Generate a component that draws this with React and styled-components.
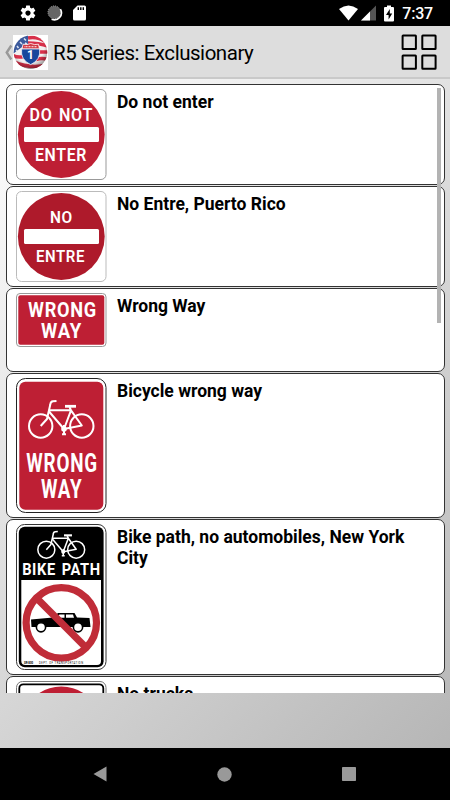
import styled, { createGlobalStyle } from 'styled-components';

const GlobalStyle = createGlobalStyle`
  * {
    box-sizing: border-box;
  }
  body {
    margin: 0;
    font-family: Roboto, sans-serif;
    color: #000;
  }
`

const Screen = styled.div`
  display: flex;
  flex-direction: column;
  width: 450px;
  height: 800px;
  overflow: hidden;
  background: #000;
`

const StatusBar = styled.div`
  display: flex;
  align-items: center;
  justify-content: space-between;
  flex: none;
  height: 26px;
  padding: 0 17px 0 19px;
  background: #000;
`

const StatusGroup = styled.div`
  display: flex;
  align-items: center;
  gap: ${({ gap }) => gap}px;
`

const Clock = styled.span`
  font-size: 16px;
  font-weight: 500;
  line-height: 26px;
  letter-spacing: -0.2px;
  padding-top: 1px;
  color: #fff;
`

const ActionBar = styled.header`
  display: flex;
  align-items: center;
  flex: none;
  height: 53px;
  padding: 1px 13px 0 5px;
  background: #dddddd;
  border-bottom: 2px solid #c9c9c9;
`

const Title = styled.h1`
  flex: 1;
  margin: 0 0 0 5px;
  padding-top: 2px;
  font-size: 20.5px;
  font-weight: 400;
  line-height: 26px;
  letter-spacing: -0.46px;
  white-space: nowrap;
`

const Body = styled.main`
  flex: 1;
  min-height: 0;
  padding: 5px 5px 0 6px;
  background: linear-gradient(135deg, #ffffff 0%, #b6b6b6 100%);
`

const List = styled.div`
  display: flex;
  flex-direction: column;
  gap: 1px;
  position: relative;
  width: 439px;
  height: 609px;
  overflow: hidden;
`

const ScrollThumb = styled.div`
  position: absolute;
  top: 4px;
  right: 4px;
  width: 4px;
  height: 235px;
  background: #b3b3b3;
`

const Row = styled.div`
  display: flex;
  align-items: flex-start;
  flex: none;
  height: ${({ height }) => height}px;
  padding: 4px 15px 0 9px;
  border: 1px solid #333;
  border-radius: 7px;
  background: #fff;
`

const RowLabel = styled.div`
  margin: 3px 0 0 11px;
  font-size: 17.5px;
  font-weight: 700;
  line-height: 20.6px;
`

const SignSvg = styled.svg`
  display: block;
  flex: none;
  overflow: visible;
`

const SignText = styled.text`
  font-family: Roboto, sans-serif;
  font-weight: ${({ weight }) => weight || 600};
  letter-spacing: 0.04em;
  word-spacing: 0.12em;
  fill: #fff;
`

const NavBar = styled.nav`
  display: flex;
  align-items: center;
  justify-content: space-between;
  flex: none;
  height: 52px;
  padding: 0 94px 0 93px;
  background: #000;
`

// every legend on a sign is fitted to a fixed width
const Legend = ({ x, y, size, width, weight, children }) => (
  <SignText x={x} y={y} fontSize={size} textLength={width} lengthAdjust="spacingAndGlyphs" weight={weight}>
    {children}
  </SignText>
)

const Bike = ({ transform, width = 2 }) => (
  <g transform={transform} fill="none" stroke="#fff" strokeWidth={width} strokeLinejoin="round">
    <circle cx="24.7" cy="48" r="11.7" />
    <circle cx="65.8" cy="48" r="11.7" />
    <path d="M24.7 48 L31 41 L34.3 26.5 Q34.5 23.5 37 23.3 L40.5 23" />
    <path d="M33 32.3 H55 L48 51 L33 33.5 M48 51 L65.8 47.5 L55 32.3 L53.5 29" />
    <path d="M49 28.3 H60" strokeWidth={width + 0.8} />
    <path d="M48 47 V56 M46 56.3 H50" />
    <circle cx="48" cy="51" r="1.8" fill="#fff" />
  </g>
)

const EnterSign = ({ red, line, top, bottom }) => (
  <SignSvg width="90" height="91" viewBox="0 0 90 91">
    <rect x="0.5" y="0.5" width="89.5" height="90" rx="5" fill="#fff" stroke={line} />
    <circle cx="45.3" cy="45.5" r="43.4" fill={red} />
    <rect x="8" y="38" width="75" height="15" rx="1.5" fill="#fff" />
    <Legend {...top} />
    <Legend {...bottom} />
  </SignSvg>
)

const DoNotEnter = () => (
  <EnterSign
    red="#be1f34"
    line="#999"
    top={{ x: 13.5, y: 32.3, size: 18, width: 63.5, children: 'DO NOT' }}
    bottom={{ x: 19, y: 72.2, size: 18, width: 52, children: 'ENTER' }}
  />
)

const NoEntre = () => (
  <EnterSign
    red="#ae1a2b"
    line="#bbb"
    top={{ x: 34, y: 32, size: 17, width: 22.8, children: 'NO' }}
    bottom={{ x: 20, y: 71, size: 17, width: 49, children: 'ENTRE' }}
  />
)

const WrongWay = () => (
  <SignSvg width="90" height="54" viewBox="0 0 90 54">
    <rect x="0.5" y="0.5" width="89.5" height="53" rx="3.5" fill="#fff" stroke="#999" />
    <rect x="2.3" y="2.3" width="86" height="49.5" rx="2" fill="#be1f34" />
    <Legend x="12" y="24.3" size="21" width="69" weight={700}>WRONG</Legend>
    <Legend x="25" y="45.3" size="21" width="41" weight={700}>WAY</Legend>
  </SignSvg>
)

const BicycleWrongWay = () => (
  <SignSvg width="90" height="135" viewBox="0 0 90 135">
    <rect x="0.5" y="0.5" width="89.5" height="134" rx="9" fill="#fff" stroke="#222" />
    <rect x="3.3" y="3.7" width="84" height="128" rx="6" fill="#be1f34" />
    <Bike />
    <Legend x="10.3" y="93.7" size="25.5" width="71.5" weight={700}>WRONG</Legend>
    <Legend x="25" y="119.8" size="25.5" width="41.5" weight={700}>WAY</Legend>
  </SignSvg>
)

const BikePath = () => (
  <SignSvg width="90" height="146" viewBox="0 0 90 146">
    <rect x="0.5" y="0.5" width="89.5" height="145" rx="8" fill="#fff" stroke="#333" />
    <rect x="2.8" y="2.8" width="84.8" height="140.4" rx="6" fill="#000" />
    <path d="M5.3 56 H85 V137 Q85 141 81 141 H9.3 Q5.3 141 5.3 137 Z" fill="#fff" />
    <Bike transform="translate(12.4 -9.2) scale(0.726)" width={2.1} />
    <Legend x="6.2" y="50.5" size="16.5" width="78.5" weight={700}>BIKE PATH</Legend>
    <path d="M15 95.5 L37 93.5 L42 89 H58.5 L61 93.5 L73.5 94 L74.5 103 H15.5 Z" fill="#000" />
    <path d="M40.5 93.8 L43.5 90.5 H48.5 V93.8 Z M50 90.5 H57 L58 93.8 H50 Z" fill="#fff" />
    <circle cx="25" cy="103.3" r="4.6" fill="#fff" stroke="#000" strokeWidth="1.6" />
    <circle cx="62" cy="103.3" r="4.6" fill="#fff" stroke="#000" strokeWidth="1.6" />
    <g fill="none" stroke="#c02c38" strokeWidth="7.2">
      <circle cx="45.3" cy="98.8" r="35.2" />
      <path d="M20.5 74 L70.2 123.7" />
    </g>
    <text x="8" y="139.5" fontSize="2.8" fontWeight="700" textLength="9">SR-800</text>
    <text x="23" y="139.7" fontSize="2.6" textLength="44">DEPT. OF TRANSPORTATION</text>
  </SignSvg>
)

const NoTrucks = () => (
  <SignSvg width="90" height="90" viewBox="0 0 90 90">
    <rect x="0.5" y="0.5" width="89.5" height="89" rx="6" fill="#fff" stroke="#777" />
    <rect x="3.3" y="3.3" width="84" height="84" rx="4" fill="#fff" stroke="#000" strokeWidth="1.8" />
    <circle cx="45.3" cy="45.5" r="36" fill="none" stroke="#be1f34" strokeWidth="8" />
  </SignSvg>
)

const BackChevron = () => (
  <svg width="8" height="18" viewBox="0 0 8 18">
    <path d="M6.3 2.5 L1.7 9.5 L6.3 16.5" fill="none" stroke="#999" strokeWidth="2.4" />
  </svg>
)

const AppLogo = () => (
  <svg width="35" height="35" viewBox="0 0 35 35">
    <defs>
      <clipPath id="globe">
        <circle cx="17.5" cy="17.3" r="16.8" />
      </clipPath>
      <radialGradient id="shade" cx="0.45" cy="0.35" r="0.65">
        <stop offset="0.7" stopColor="#000" stopOpacity="0" />
        <stop offset="1" stopColor="#000" stopOpacity="0.4" />
      </radialGradient>
    </defs>
    <rect width="35" height="35" fill="#fff" />
    <g clipPath="url(#globe)">
      <rect width="35" height="35" fill="#f4f0f0" />
      <g fill="none" stroke="#d8304a" strokeWidth="3.6">
        <path d="M15 3 Q24 1 33 7 M15 8 Q26 8 35 11 M24 17 H35" />
        <path d="M0 20.5 Q5 23 11 21.5 M23 24.5 Q29 22.5 35 24.5 M1 27 Q17 34 34 30" />
      </g>
      <path d="M0 0 H15 V9 Q8 12 0 19 Z" fill="#3c5a9c" />
      <path d="M4 11 L5.5 13 M7 7 L9 9 M11 3.5 L13 5.5 M12 8 L14 9 M3 15 L4 16" stroke="#dce4f4" strokeWidth="1.5" />
      <circle cx="17.5" cy="17.3" r="16.8" fill="url(#shade)" />
    </g>
    <path d="M10 9.2 Q14 10.3 17.7 8.5 Q21.5 10.3 25.5 9.2 L26.5 14 H9 Z" fill="#d23a44" stroke="#fff" strokeWidth="0.8" />
    <path d="M8.6 14 H26.6 Q28 25 17.7 29.6 Q7.2 25 8.6 14 Z" fill="#17479c" stroke="#e8eef8" strokeWidth="0.8" />
    <path d="M11.5 11.7 H24" stroke="#f4c6ca" strokeWidth="1.2" strokeDasharray="1 0.5" />
    <text x="17.5" y="24.2" fontSize="12" fontWeight="700" fill="#fff" textAnchor="middle">1</text>
  </svg>
)

const GridIcon = () => (
  <svg width="36" height="36" viewBox="0 0 36 36">
    <g fill="none" stroke="#000" strokeWidth="2">
      <rect x="1.6" y="1.6" width="13.3" height="13.3" rx="0.5" />
      <rect x="21.3" y="1.6" width="13.3" height="13.3" rx="0.5" />
      <rect x="1.6" y="21.5" width="13.3" height="13.3" rx="0.5" />
      <rect x="21.3" y="21.5" width="13.3" height="13.3" rx="0.5" />
    </g>
  </svg>
)

const GearIcon = () => (
  <svg width="18" height="18" viewBox="0 0 24 24" fill="#fff">
    <path d="M19.43 12.98c.04-.32.07-.64.07-.98s-.03-.66-.07-.98l2.11-1.65c.19-.15.24-.42.12-.64l-2-3.46c-.12-.22-.39-.3-.61-.22l-2.49 1c-.52-.4-1.08-.73-1.69-.98l-.38-2.65C14.46 2.18 14.25 2 14 2h-4c-.25 0-.46.18-.49.42l-.38 2.65c-.61.25-1.17.59-1.69.98l-2.49-1c-.23-.09-.49 0-.61.22l-2 3.46c-.13.22-.07.49.12.64l2.11 1.65c-.04.32-.07.65-.07.98s.03.66.07.98l-2.11 1.65c-.19.15-.24.42-.12.64l2 3.46c.12.22.39.3.61.22l2.49-1c.52.4 1.08.73 1.69.98l.38 2.65c.03.24.24.42.49.42h4c.25 0 .46-.18.49-.42l.38-2.65c.61-.25 1.17-.59 1.69-.98l2.49 1c.23.09.49 0 .61-.22l2-3.46c.12-.22.07-.49-.12-.64l-2.11-1.65zM12 15.5c-1.93 0-3.5-1.57-3.5-3.5s1.57-3.5 3.5-3.5 3.5 1.57 3.5 3.5-1.57 3.5-3.5 3.5z" />
  </svg>
)

const SyncIcon = () => (
  <svg width="16" height="16" viewBox="0 0 16 16">
    <circle cx="7.4" cy="7.3" r="6.4" fill="#666" />
    <circle cx="7.4" cy="7.3" r="6.4" fill="none" stroke="#aaa" strokeDasharray="1 1" />
    <path d="M13.4 4.2 A7 7 0 0 1 4.6 14.2" fill="none" stroke="#fff" strokeWidth="1.6" />
  </svg>
)

const SdCardIcon = () => (
  <svg width="13" height="16" viewBox="0 0 13 16">
    <path d="M4.5 0.5 H11.5 Q13 0.5 13 2 V14 Q13 15.5 11.5 15.5 H1.5 Q0 15.5 0 14 V5 Z" fill="#fff" />
    <path d="M5.3 2.3 V5 M7.8 2.3 V5 M10.3 2.3 V5" stroke="#000" strokeWidth="1.4" />
  </svg>
)

const WifiIcon = () => (
  <svg width="19" height="16" viewBox="0 0 19 16">
    <path d="M0 4 Q9.5 -3 19 4 L9.5 15.5 Z" fill="#fff" />
  </svg>
)

const SignalIcon = () => (
  <svg width="15" height="16" viewBox="0 0 15 16">
    <path d="M0 15.5 L15 0.5 V15.5 Z" fill="#555" />
    <path d="M0 15.5 L9 6.5 V15.5 Z" fill="#fff" />
  </svg>
)

const BatteryIcon = () => (
  <svg width="10" height="17" viewBox="0 0 10 17">
    <path d="M3 0.5 H7 V2 H9 Q10 2 10 3 V15.5 Q10 16.5 9 16.5 H1 Q0 16.5 0 15.5 V3 Q0 2 1 2 H3 Z" fill="#fff" />
    <path d="M5.8 4 L2 10 H4.6 V14.5 L8.2 8.4 H5.8 Z" fill="#000" />
  </svg>
)

const signs = [
  { label: 'Do not enter', height: 101, Sign: DoNotEnter },
  { label: 'No Entre, Puerto Rico', height: 101, Sign: NoEntre },
  { label: 'Wrong Way', height: 84, Sign: WrongWay },
  { label: 'Bicycle wrong way', height: 145, Sign: BicycleWrongWay },
  { label: 'Bike path, no automobiles, New York City', height: 156, Sign: BikePath },
  { label: 'No trucks', height: 101, Sign: NoTrucks },
]

const App = () => {
  return (
    <Screen>
      <GlobalStyle />
      <StatusBar>
        <StatusGroup gap={10}>
          <GearIcon />
          <SyncIcon />
          <SdCardIcon />
        </StatusGroup>
        <StatusGroup gap={8}>
          <StatusGroup gap={3}>
            <WifiIcon />
            <SignalIcon />
          </StatusGroup>
          <BatteryIcon />
          <Clock>7:37</Clock>
        </StatusGroup>
      </StatusBar>
      <ActionBar>
        <BackChevron />
        <AppLogo />
        <Title>R5 Series: Exclusionary</Title>
        <GridIcon />
      </ActionBar>
      <Body>
        <List>
          {signs.map(({ label, height, Sign }) => (
            <Row key={label} height={height}>
              <Sign />
              <RowLabel>{label}</RowLabel>
            </Row>
          ))}
          <ScrollThumb />
        </List>
      </Body>
      <NavBar>
        <svg width="14" height="16" viewBox="0 0 14 16">
          <path d="M0.5 8 L13.5 0.5 V15.5 Z" fill="#999" />
        </svg>
        <svg width="15" height="15" viewBox="0 0 15 15">
          <circle cx="7.5" cy="7.5" r="7.2" fill="#999" />
        </svg>
        <svg width="14" height="14" viewBox="0 0 14 14">
          <rect width="14" height="14" rx="0.7" fill="#999" />
        </svg>
      </NavBar>
    </Screen>
  )
}

export default App
